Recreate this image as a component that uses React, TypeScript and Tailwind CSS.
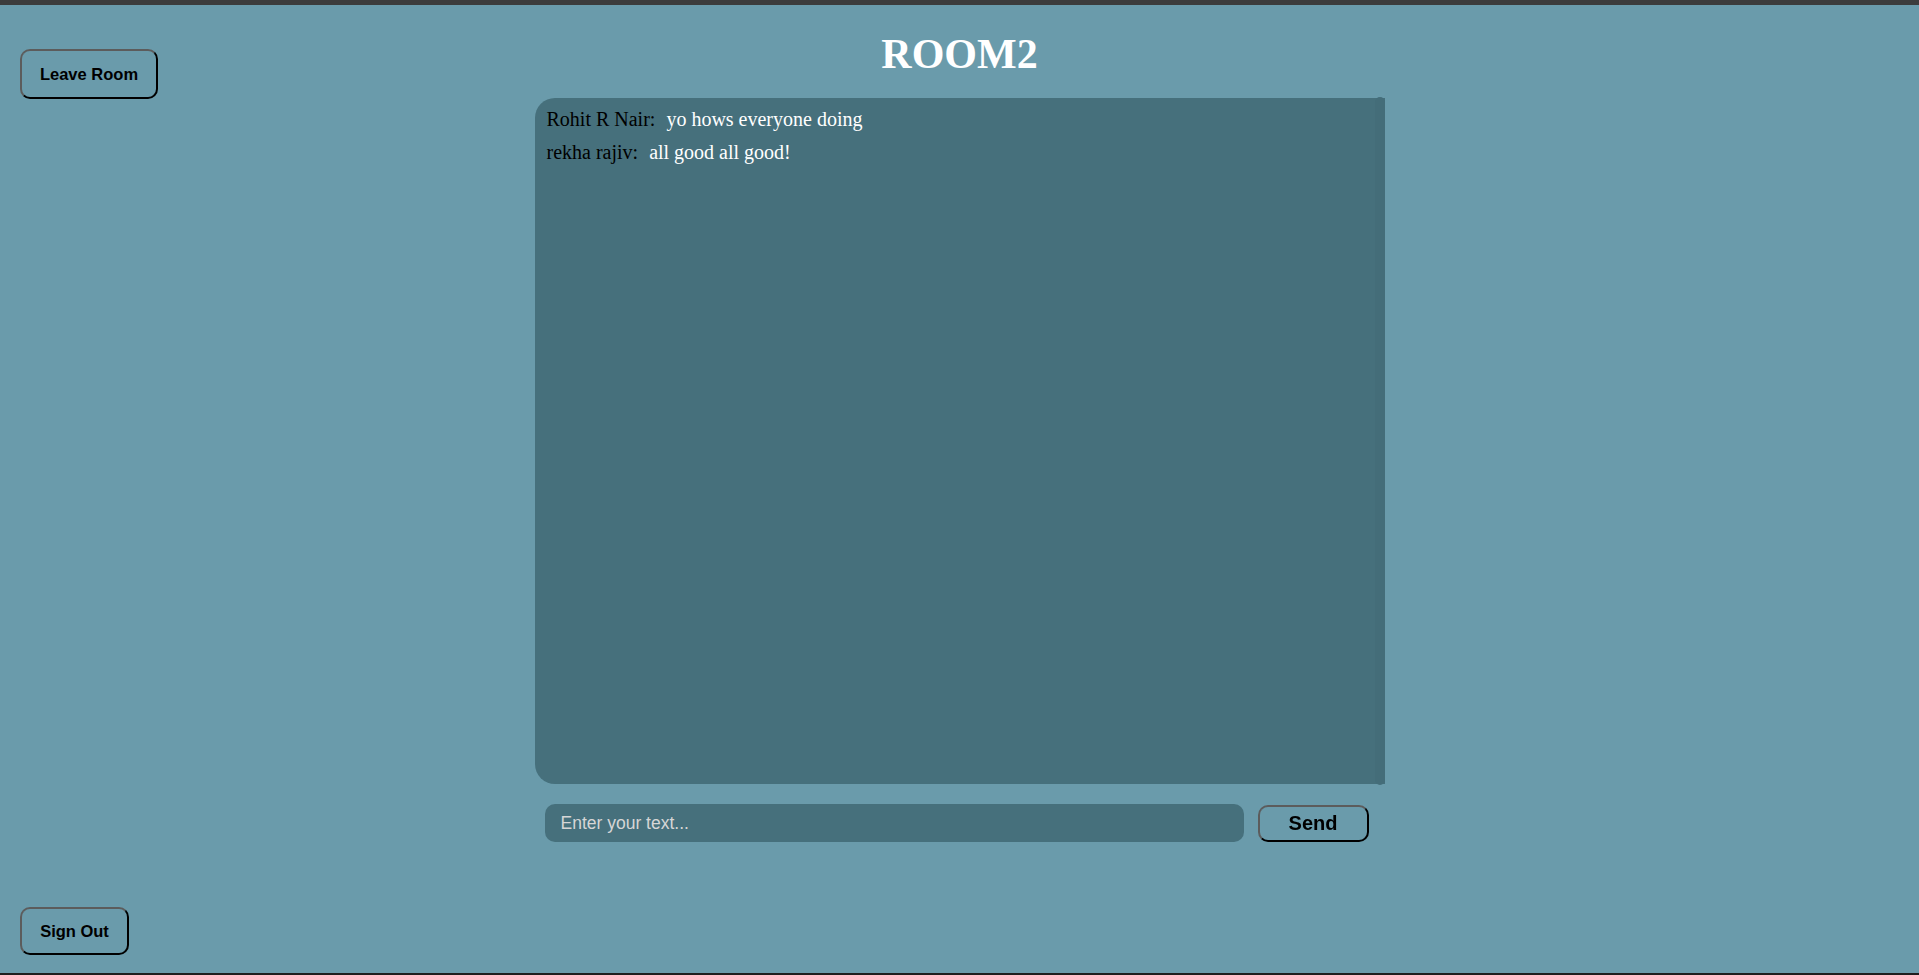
import React from "react";

const btn =
  "flex items-center justify-center rounded-[10px] border-2 border-t-[#5c5c5c] border-l-[#5c5c5c] border-b-black border-r-black bg-transparent text-black font-bold font-['Liberation_Sans',Arial,sans-serif]";

export default function App() {
  const messages = [
    { name: "Rohit R Nair:", text: "yo hows everyone doing" },
    { name: "rekha rajiv:", text: "all good all good!" },
  ];
  return (
    <div className="h-[975px] w-full bg-[#6a9bab] flex flex-col overflow-hidden">
      <div className="h-[5px] bg-[#3c3c3c] shrink-0" />
      <div className="flex-1 grid grid-cols-[1fr_850px_1fr]">
        <div className="flex flex-col justify-between pl-[20px] pt-[44px] pb-[18px]">
          <button className={btn + " w-[138px] h-[50px] text-[16.5px]"}>Leave Room</button>
          <button className={btn + " w-[109px] h-[48px] text-[16.5px]"}>Sign Out</button>
        </div>
        <div className="flex flex-col">
          <h1 className="mt-[26px] text-center text-white font-bold text-[42px] leading-[46px] font-['Liberation_Serif','Times_New_Roman',serif]">
            ROOM2
          </h1>
          <div className="mt-[21px] h-[686px] flex bg-[#46707c] rounded-l-[20px]">
            <div className="flex-1 pt-[5px] pl-[12px] font-['Liberation_Serif','Times_New_Roman',serif] text-[20px] leading-[33px]">
              {messages.map((m, i) => (
                <div key={i} className="flex">
                  <span className="text-black">{m.name}</span>
                  <span className="text-white ml-[11px]">{m.text}</span>
                </div>
              ))}
            </div>
            <div className="w-[10px] -my-[1px] rounded-[5px] bg-[#446d79]" />
          </div>
          <div className="mt-[20px] flex items-center pl-[10px] pr-[16px] gap-[14px]">
            <input
              autoFocus
              placeholder="Enter your text..."
              className="flex-1 h-[38px] rounded-[10px] bg-[#46707c] pl-[16px] outline-none border-0 text-white caret-white placeholder:text-[#d6d6d6] text-[17.5px] font-['Liberation_Sans',Arial,sans-serif]"
            />
            <button className={btn + " w-[111px] h-[37px] text-[20px]"}>Send</button>
          </div>
        </div>
        <div />
      </div>
      <div className="h-[2px] bg-[#1e1e1e] shrink-0" />
    </div>
  );
}
